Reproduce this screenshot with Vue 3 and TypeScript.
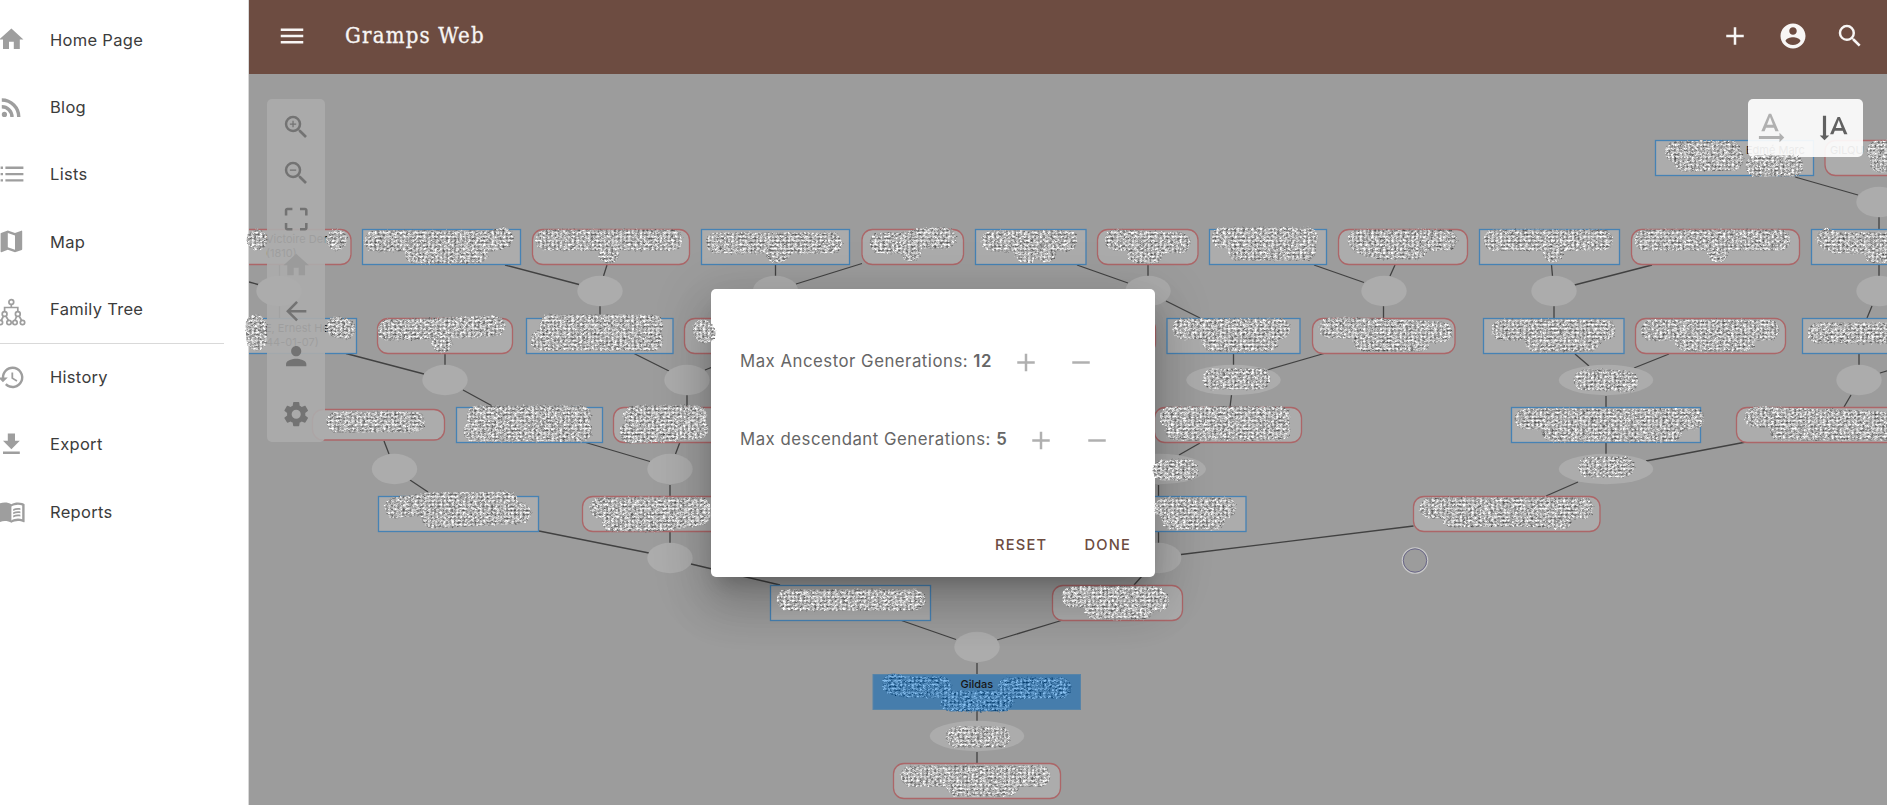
<script setup lang="ts">
interface Item { label: string; icon: string; section?: boolean }
type Box = [x1: number, x2: number, y: number, kind: 'm' | 'f' | 'root', h?: number]

const icons: Record<string, string> = {
  home: 'M10 20v-6h4v6h5v-8h3L12 3 2 12h3v8z',
  blog: 'M6.18 15.64a2.18 2.18 0 1 1 0 4.36 2.18 2.18 0 0 1 0-4.36M4 4.44A15.56 15.56 0 0 1 19.56 20h-2.83A12.73 12.73 0 0 0 4 7.27zm0 5.66a9.9 9.9 0 0 1 9.9 9.9h-2.83A7.07 7.07 0 0 0 4 12.93z',
  list: 'M3 5.500h2v2H3zm0 5.300h2v2H3zm0 5.200h2v2H3zM7 5.500h15v2H7zm0 5.300h15v2H7zm0 5.200h15v2H7z',
  map: 'M20.500 3l-.16.03L15 5.100 9 3 3.360 4.900c-.21.07-.36.25-.36.480V20.500c0 .28.22.5.5.5l.16-.03L9 18.900l6 2.100 5.640-1.900c.21-.07.36-.25.36-.480V3.500c0-.28-.22-.5-.5-.5zM15 19l-6-2.110V5l6 2.110z',
  history: 'M13.500 8H12v5l4.280 2.540.720-1.210-3.500-2.080zM13 3a9 9 0 0 0-9 9H1l3.960 4.030L9 12H6a7 7 0 1 1 2.060 4.940l-1.420 1.420A9 9 0 1 0 13 3',
  download: 'M5 20h14v-2H5m14-9h-4V3H9v6H5l7 7z',
  book: 'M21 5c-1.110-.35-2.330-.5-3.500-.5-1.950 0-4.050.4-5.500 1.500-1.450-1.100-3.550-1.500-5.500-1.500S2.450 4.900 1 6v14.650c0 .25.25.5.5.5.1 0 .15-.05.25-.05C3.100 20.450 5.050 20 6.500 20c1.950 0 4.050.4 5.500 1.500 1.350-.85 3.800-1.500 5.500-1.500 1.650 0 3.350.3 4.750 1.050.1.05.15.05.25.05.25 0 .5-.25.5-.5V6c-.6-.45-1.250-.75-2-1zm0 13.500c-1.100-.35-2.300-.5-3.500-.5-1.700 0-4.150.65-5.500 1.500V8c1.350-.85 3.800-1.500 5.500-1.500 1.200 0 2.400.15 3.500.5zM13.500 10c2-.8 4-1 6-.6v1.500c-2-.4-4-.2-6 .7zm0 2.700c2-.8 4-1 6-.6v1.500c-2-.4-4-.2-6 .7zm0 2.700c2-.8 4-1 6-.6v1.500c-2-.4-4-.2-6 .7z',
  menu: 'M3 6h18v2H3zm0 5h18v2H3zm0 5h18v2H3z',
  plus: 'M19 13h-6v6h-2v-6H5v-2h6V5h2v6h6z',
  minus: 'M19 13H5v-2h14z',
  account: 'M12 2C6.480 2 2 6.480 2 12s4.480 10 10 10 10-4.480 10-10S17.520 2 12 2zm0 3c1.660 0 3 1.340 3 3s-1.340 3-3 3-3-1.340-3-3 1.340-3 3-3zm0 14.200c-2.500 0-4.710-1.280-6-3.220.03-1.990 4-3.080 6-3.080 1.990 0 5.970 1.090 6 3.080-1.290 1.940-3.500 3.220-6 3.220z',
  search: 'M15.500 14h-.79l-.28-.27A6.470 6.470 0 0 0 16 9.500 6.500 6.500 0 1 0 9.500 16c1.610 0 3.090-.59 4.230-1.570l.27.28v.79l5 4.990L20.490 19zm-6 0C7.010 14 5 11.990 5 9.500S7.010 5 9.500 5 14 7.010 14 9.500 11.990 14 9.500 14z',
  zoomIn: 'M15.500 14h-.79l-.28-.27A6.470 6.470 0 0 0 16 9.500 6.500 6.500 0 1 0 9.500 16c1.610 0 3.090-.59 4.230-1.570l.27.28v.79l5 4.990L20.490 19zm-6 0C7.010 14 5 11.990 5 9.500S7.010 5 9.500 5 14 7.010 14 9.500 11.990 14 9.500 14zM12 10h-2v2H9v-2H7V9h2V7h1v2h2z',
  zoomOut: 'M15.500 14h-.79l-.28-.27A6.470 6.470 0 0 0 16 9.500 6.500 6.500 0 1 0 9.500 16c1.610 0 3.090-.59 4.230-1.570l.27.28v.79l5 4.990L20.490 19zm-6 0C7.010 14 5 11.990 5 9.500S7.010 5 9.500 5 14 7.010 14 9.500 11.990 14 9.500 14zM7 9h5v1H7z',
  fit: 'M3 5v4h2V5h4V3H5c-1.100 0-2 .9-2 2zm2 10H3v4c0 1.100.9 2 2 2h4v-2H5zm14 4h-4v2h4c1.100 0 2-.9 2-2v-4h-2zm0-16h-4v2h4v4h2V5c0-1.100-.9-2-2-2z',
  back: 'M20 11H7.830l5.590-5.590L12 4l-8 8 8 8 1.410-1.410L7.830 13H20z',
  person: 'M12 12c2.210 0 4-1.790 4-4s-1.790-4-4-4-4 1.790-4 4 1.790 4 4 4zm0 2c-2.670 0-8 1.340-8 4v2h16v-2c0-2.660-5.330-4-8-4z',
  gear: 'M19.140 12.940c.04-.3.06-.61.06-.94 0-.32-.02-.64-.07-.94l2.030-1.580c.18-.14.23-.41.12-.61l-1.920-3.320c-.12-.22-.37-.29-.59-.22l-2.390.96c-.5-.38-1.030-.7-1.620-.94l-.36-2.540c-.04-.24-.24-.41-.48-.41h-3.840c-.24 0-.43.17-.47.41l-.36 2.540c-.59.24-1.130.57-1.620.94l-2.390-.96c-.22-.08-.47 0-.59.22L2.740 8.870c-.12.21-.08.47.12.61l2.030 1.580c-.05.3-.09.63-.09.94s.02.64.07.94l-2.030 1.580c-.18.14-.23.41-.12.61l1.920 3.320c.12.22.37.29.59.22l2.390-.96c.5.38 1.030.7 1.620.94l.36 2.540c.05.24.24.41.48.41h3.840c.24 0 .44-.17.47-.41l.36-2.540c.59-.24 1.130-.56 1.620-.94l2.390.96c.22.08.47 0 .59-.22l1.920-3.320c.12-.22.07-.47-.12-.61zM12 15.600A3.600 3.600 0 1 1 12 8.400a3.600 3.600 0 0 1 0 7.200z',
  textRight: 'M21 18l-3-3v2H5v2h13v2zM9.500 11.800h5l.9 2.200h2.100L12.750 3h-1.500L6.500 14h2.100zM12 4.980L13.870 10h-3.740z',
  textDown: 'M15.750 5h-1.500L9.500 16h2.100l.9-2.200h5l.9 2.200h2.100zm-2.620 7L15 6.980 16.870 12zM6 19.750l3-3H7V4.250H5v12.500H3z',
}

const items: Item[] = [
  { label: 'Home Page', icon: 'home' },
  { label: 'Blog', icon: 'blog' },
  { label: 'Lists', icon: 'list' },
  { label: 'Map', icon: 'map' },
  { label: 'Family Tree', icon: 'tree' },
  { label: 'History', icon: 'history', section: true },
  { label: 'Export', icon: 'download' },
  { label: 'Reports', icon: 'book' },
]

const tools = ['zoomIn', 'zoomOut', 'fit', 'home', 'back', 'person', 'gear']

const boxes: Box[] = [
  [1655.5, 1813.5, 140.500, 'm'], [1825, 1990, 140.500, 'f'],
  [200, 351, 229.500, 'f'], [362.500, 520.500, 229.500, 'm'], [532.500, 689.500, 229.500, 'f'], [701.500, 849.500, 229.500, 'm'],
  [862, 963.500, 229.500, 'f'], [975.500, 1086, 229.500, 'm'], [1097.500, 1198, 229.500, 'f'], [1209.500, 1326.500, 229.500, 'm'],
  [1338.500, 1467.500, 229.500, 'f'], [1479.500, 1619.500, 229.500, 'm'], [1631.500, 1799.500, 229.500, 'f'], [1811.500, 1960, 229.500, 'm'],
  [200, 356.500, 318.500, 'm'], [377.500, 512.500, 318.500, 'f'], [526.500, 673, 318.500, 'm'], [684.500, 820, 318.500, 'f'],
  [1020, 1155.500, 318.500, 'f'], [1167, 1300, 318.500, 'm'], [1312.500, 1455, 318.500, 'f'], [1483.500, 1624, 318.500, 'm'],
  [1635.500, 1785.500, 318.500, 'f'], [1802.500, 1950, 318.500, 'm'],
  [312.500, 444.500, 409.500, 'f', 30.500], [456.500, 602.500, 407.500, 'm'], [613.500, 760, 407.500, 'f'], [1154.500, 1301.500, 407.500, 'f'],
  [1511.500, 1700.500, 407.500, 'm'], [1736.500, 1960, 407.500, 'f'],
  [378.500, 538.500, 496.500, 'm'], [582.500, 740, 496.500, 'f'], [1080, 1246, 496.500, 'm'], [1413.500, 1600, 496.500, 'f'],
  [770.500, 930.500, 585.500, 'm'], [1052.500, 1182.500, 585.500, 'f'],
  [873, 1080.500, 674.500, 'root'], [893.500, 1060.500, 763.500, 'f'],
]

const unions: [number, number, number][] = [
  [1879, 202, 22.700], [279, 291, 22.700], [600, 291, 22.700], [775.500, 291, 22.700], [1148, 291, 22.700], [1384, 291, 22.700],
  [1554, 291, 22.700], [1879, 291, 22.700], [445, 380, 22.700], [687, 380, 22.700], [1859, 380, 22.700], [1233.500, 380, 47.300],
  [1606, 380, 47.300], [394.500, 469, 22.700], [670, 469, 22.700], [1158.700, 469, 47.300], [1606, 469, 47.300], [670, 558, 22.700],
  [1158.700, 558, 22.700], [977, 647, 22.700], [977, 736, 47.300],
]

const links = [
  'M1795 177L1858 195M1879 217V229M249 282L258 284.500M279.500 265V276M279.500 306V318M505 265L579 284.500M607 265L603.500 276M600 306V318',
  'M775.500 265V276M862 263.500L796 284M1077 265L1128 283M1148 265V276M1166 301L1200 318M1314 265L1364 282.500M1395 265L1390 276M1383.500 306V318',
  'M1551.500 265L1552.500 276M1652 265L1574.500 285M1554 306V318M1879 265V276M1872 306L1867 318',
  'M346 353.500L424 374M445 354V365M463 390L496 408M634 353.500L669 371M705 370L715 366M687 395V407M1233.500 354V365M1324 353.500L1267 370M1231.500 395L1230 407',
  'M1575 354L1589 366M1669 354L1634 368M1606 396V407M1859 354V365M1880 373L1890 370M1851 395L1844 407',
  'M384 441L389 454M410 480L428 492M584 442L650 461.500M680 442L675.500 454M670 485V496M1200 443L1179 455M1158.500 485V496M1606 443V454M1746 442L1646 461M1578 482L1546 496',
  'M539 531L649 553M670 532V543M691 564L780 585M1158.500 532V543M1413.500 526L1181 554.500M1142 576L1134 585',
  'M900 620L956 639.500M1063 620L997 640M977 663V674M977 710V721M977 752V763',
].join('')

const redactions = [
  'M1675 152L1730 151L1733 160L1684 161M1756 166H1793M1877 151H1895M1880 162H1895',
  'M257 240h.1M337 240h.1M375 241H492L503 238M415 253H478M546 240H672M609 253h.1M716 243H832M776 252h4M880 243H900L925 238H946M911 251h.1',
  'M992 241H1067M1025 252h4M1046 252h.1M1115 240L1180 243M1138 253H1153M1222 238H1308L1304 246M1238 250H1306M1358 240H1447M1360 243L1380 249H1416',
  'M1494 240H1603M1553 252h.1M1645 240H1780M1718 252h.1M1827 239h.1M1835 243H1895M1875 253H1895',
  'M256 325L257 340M337 327L345 329M388 330L420 329L495 326M442 342h.1M550 325H653M541 340H653M703 330L705 333',
  'M1183 329H1280M1212 341H1268M1330 328H1350L1442 332M1364 341H1420M1502 330H1605M1535 341H1590M1651 330H1769M1686 341H1745M1818 333H1895',
  'M1213 379H1260M1584 380H1610L1628 382M337 422H415M477 416H581M474 431H582M634 416H697M630 433L698 429M1170 417H1280M1176 430H1280',
  'M1525 419H1694M1552 431H1672M1755 417L1895 422M1780 430H1895M1163 470H1188M1589 467H1624',
  'M395 508L430 503L508 502M432 518L521 513M600 508H700M612 521H660L700 515M1165 508H1226M1172 519H1215M1430 508H1583M1452 517L1530 516L1562 519',
  'M787 600H915M1072 597H1155L1159 601M1095 609H1143M956 737H1000M911 776H1040M957 786H1008',
].join('')
</script>

<template>
  <div class="app">
    <nav class="sidebar">
      <div v-for="i in items" :key="i.label" class="item" :class="{ section: i.section }">
        <svg v-if="i.icon === 'tree'" class="tree-icon" viewBox="-3 0 30 30">
          <path d="M11.300 7.500v3M4.600 15v-4.500h13.200V15M3.500 19l-2.500 5M5.800 19l3 5M16.700 19l-2 5M19 19l3 5" />
          <circle cx="11.300" cy="5" r="2.400" /><circle cx="4.600" cy="17" r="2.400" /><circle cx="17.800" cy="17" r="2.400" />
          <circle cx=".4" cy="25.500" r="2.200" /><circle cx="9" cy="25.500" r="2.200" /><circle cx="15" cy="25.500" r="2.200" /><circle cx="22.500" cy="25.500" r="2.200" />
        </svg>
        <svg v-else viewBox="0 0 24 24"><path :d="icons[i.icon]" /></svg>
        <span>{{ i.label }}</span>
      </div>
    </nav>

    <main class="main">
      <header class="bar">
        <svg class="menu" viewBox="0 0 24 24"><path :d="icons.menu" /></svg>
        <h1>Gramps Web</h1>
        <div class="actions">
          <svg viewBox="0 0 24 24"><path :d="icons.plus" /></svg>
          <svg viewBox="0 0 24 24"><path :d="icons.account" /></svg>
          <svg viewBox="0 0 24 24"><path :d="icons.search" /></svg>
        </div>
      </header>

      <section class="canvas">
        <svg class="graph" viewBox="248 74 1639 731">
          <path class="link" :d="links" />
          <ellipse v-for="(u, k) in unions" :key="k" class="union" :cx="u[0]" :cy="u[1]" :rx="u[2]" ry="15.200" />
          <rect
            v-for="(b, k) in boxes" :key="'b' + k" :class="b[3]"
            :x="b[0]" :y="b[2]" :width="b[1] - b[0]" :height="b[4] ?? 35" :rx="b[3] === 'f' ? 10.500 : 0"
          />
          <text x="266" y="243">Victoire Den</text>
          <text x="266" y="257">(1810)</text>
          <text x="265" y="332">E, Ernest He</text>
          <text x="266" y="346">44-01-07)</text>
          <text x="1746" y="154">Edmé Marc</text>
          <text x="1830" y="154">GILQU</text>
          <text class="name" x="960.500" y="688">Gildas</text>
        </svg>
        <div class="tools">
          <svg v-for="t in tools" :key="t" :class="t" viewBox="0 0 24 24"><path :d="icons[t]" /></svg>
        </div>
        <div class="direction">
          <svg class="off" viewBox="0 0 24 24"><path :d="icons.textRight" /></svg>
          <svg viewBox="0 0 24 24"><path :d="icons.textDown" /></svg>
        </div>
      </section>
    </main>

    <div class="dialog">
      <div class="setting">
        <span>Max Ancestor Generations: <b>12</b></span>
        <svg viewBox="0 0 24 24"><path :d="icons.plus" /></svg>
        <svg viewBox="0 0 24 24"><path :d="icons.minus" /></svg>
      </div>
      <div class="setting">
        <span>Max descendant Generations: <b>5</b></span>
        <svg viewBox="0 0 24 24"><path :d="icons.plus" /></svg>
        <svg viewBox="0 0 24 24"><path :d="icons.minus" /></svg>
      </div>
      <div class="buttons"><button>RESET</button><button>DONE</button></div>
    </div>

    <svg class="overlay" viewBox="0 0 1887 805">
      <defs>
        <pattern id="weave" width="4" height="4" patternUnits="userSpaceOnUse">
          <rect width="4" height="4" fill="#888" />
          <rect width="4" height="1" fill="#ddd" /><rect y="1" width="2" height="1" fill="#fff" />
          <rect x="2" y="2" width="1" height="1" fill="#666" /><rect y="3" width="2" height="1" fill="#bbb" />
        </pattern>
        <filter id="grain" filterUnits="userSpaceOnUse" x="0" y="0" width="1887" height="805" color-interpolation-filters="sRGB">
          <feTurbulence type="fractalNoise" baseFrequency=".35 .5" numOctaves="2" seed="4" result="n" />
          <feDisplacementMap in="SourceGraphic" in2="n" scale="3" xChannelSelector="R" yChannelSelector="G" result="s" />
          <feColorMatrix in="n" values="1.500 0 0 0 -.15  1.500 0 0 0 -.15  1.500 0 0 0 -.15  0 0 0 0 1" result="g" />
          <feComposite in="g" in2="s" operator="arithmetic" k1="0" k2=".6" k3=".5" k4="0" result="m" />
          <feComposite in="m" in2="s" operator="in" />
        </filter>
        <filter id="grain-blue" filterUnits="userSpaceOnUse" x="860" y="660" width="240" height="60" color-interpolation-filters="sRGB">
          <feTurbulence type="fractalNoise" baseFrequency=".35 .5" numOctaves="2" seed="4" result="n" />
          <feDisplacementMap in="SourceGraphic" in2="n" scale="3" xChannelSelector="R" yChannelSelector="G" result="s" />
          <feColorMatrix in="n" values="1.500 0 0 0 -.15  1.500 0 0 0 -.15  1.500 0 0 0 -.15  0 0 0 0 1" result="g" />
          <feComposite in="g" in2="s" operator="arithmetic" k1="0" k2=".6" k3=".5" k4="0" result="m" />
          <feColorMatrix in="m" values=".8 0 0 0 -.26  .8 0 0 0 -.04  .8 0 0 0 .15  0 0 0 1 0" result="b" />
          <feComposite in="b" in2="s" operator="in" />
        </filter>
      </defs>
      <g filter="url(#grain)"><path class="redaction" stroke="url(#weave)" :d="redactions" /></g>
      <g filter="url(#grain-blue)"><path class="redaction" stroke="url(#weave)" d="M893 684L905 687H941M1008 688H1061M951 701H1003" /></g>
      <circle class="ring" cx="1415" cy="560.500" r="12.700" />
      <circle class="ring inner" cx="1415" cy="560.500" r="11.700" />
    </svg>
  </div>
</template>

<style>
body { margin: 0; overflow: hidden; }
</style>

<style scoped>
.app { position: relative; display: flex; width: 1887px; height: 805px; overflow: hidden; background: #fff; font-family: Inter, "Liberation Sans", sans-serif; }
svg { display: block; flex: none; }
.sidebar { box-sizing: border-box; width: 249px; flex: none; padding-top: 6px; border-right: 1px solid #d8d8d8; }
.item { display: flex; align-items: center; height: 67.300px; padding-left: 50px; font-size: 16.500px; letter-spacing: .3px; color: #3c3c3c; }
.item svg { width: 28.800px; height: 28.800px; margin-left: -52.700px; margin-right: 23.900px; fill: #9e9e9e; }
.item .tree-icon { width: 30px; height: 30px; margin-left: -53px; margin-right: 23px; transform: translateY(3px); fill: none; stroke: #9e9e9e; stroke-width: 1.700; }
.section { position: relative; margin-top: 1px; }
.section::before { content: ""; position: absolute; left: 0; top: 0; width: 224px; height: 1px; background: #d9d9d9; }
.main { display: flex; flex-direction: column; flex: 1; min-width: 0; }
.bar { display: flex; align-items: center; height: 74px; padding: 0 22px 3px 28px; box-sizing: border-box; background: #6d4c41; color: #f7f5f4; }
.bar svg { width: 30px; height: 30px; fill: #f8f6f5; }
h1 { margin: 0 0 0 38px; font: 400 22px "DejaVu Serif Condensed", "DejaVu Serif", serif; font-stretch: condensed; letter-spacing: 1.200px; -webkit-text-stroke: .3px #f7f5f4; }
.actions { display: flex; gap: 27.500px; margin-left: auto; }
.canvas { position: relative; flex: 1; background: #9c9c9c; overflow: hidden; }
.graph { position: absolute; left: -1px; top: 0; width: 1639px; height: 731px; }
.link { stroke: #414141; stroke-width: 1.300; fill: none; }
.union { fill: #acacac; }
.m { fill: #acacac; stroke: #4682b4; stroke-width: 1.300; }
.f { fill: #acacac; stroke: #ac6668; stroke-width: 1.300; }
.root { fill: #467dac; stroke: #5784a8; }
text { font-size: 11px; fill: #161616; }
.name { font-weight: 500; }
.tools { position: absolute; left: 18px; top: 25px; display: flex; flex-direction: column; align-items: center; gap: 15.500px; box-sizing: border-box; width: 58px; height: 343px; padding-top: 13px; border-radius: 5px; background: rgba(171, 171, 171, .91); }
.tools svg { width: 30.400px; height: 30.400px; fill: #737373; }
.tools .home { fill: #9b9b9b; }
.tools .gear { margin-top: 11.500px; }
.direction { position: absolute; right: 24px; top: 25px; display: flex; gap: 26px; box-sizing: border-box; width: 115px; height: 58px; padding: 10px 3px; border-radius: 5px; background: rgba(255, 255, 255, .91); }
.direction svg { width: 38px; height: 38px; fill: #616161; }
.direction .off { fill: #b0b0b0; }
.dialog { position: absolute; left: 711px; top: 289px; box-sizing: border-box; width: 444px; height: 288px; padding: 33px 22px 0 29px; border-radius: 5px; background: #fff; box-shadow: 0 13px 18px -8px rgba(0, 0, 0, .2), 0 28px 45px 4px rgba(0, 0, 0, .14), 0 11px 54px 10px rgba(0, 0, 0, .12); }
.setting { display: flex; align-items: center; height: 78px; color: #666; font-size: 16.800px; letter-spacing: .5px; }
.setting b { font-weight: 600; }
.setting span { margin-right: 19px; white-space: nowrap; }
.setting svg { width: 30px; height: 30px; margin-right: 25.500px; transform: translateY(1.500px); fill: #b0b0b0; }
.buttons { display: flex; justify-content: flex-end; gap: 37px; margin-top: 48px; padding-right: 2px; }
.buttons button { padding: 0; border: 0; background: none; font: 500 14.700px/38px Inter, sans-serif; letter-spacing: 1.200px; color: #6d4c41; }
.overlay { position: absolute; left: 0; top: 0; width: 1887px; height: 805px; pointer-events: none; }
.redaction { fill: none; stroke-width: 21; stroke-linecap: round; stroke-linejoin: round; }
.ring { fill: none; stroke: #c9c9c9; stroke-width: 1.200; }
.inner { stroke: #6b688a; stroke-width: 1; }
</style>
